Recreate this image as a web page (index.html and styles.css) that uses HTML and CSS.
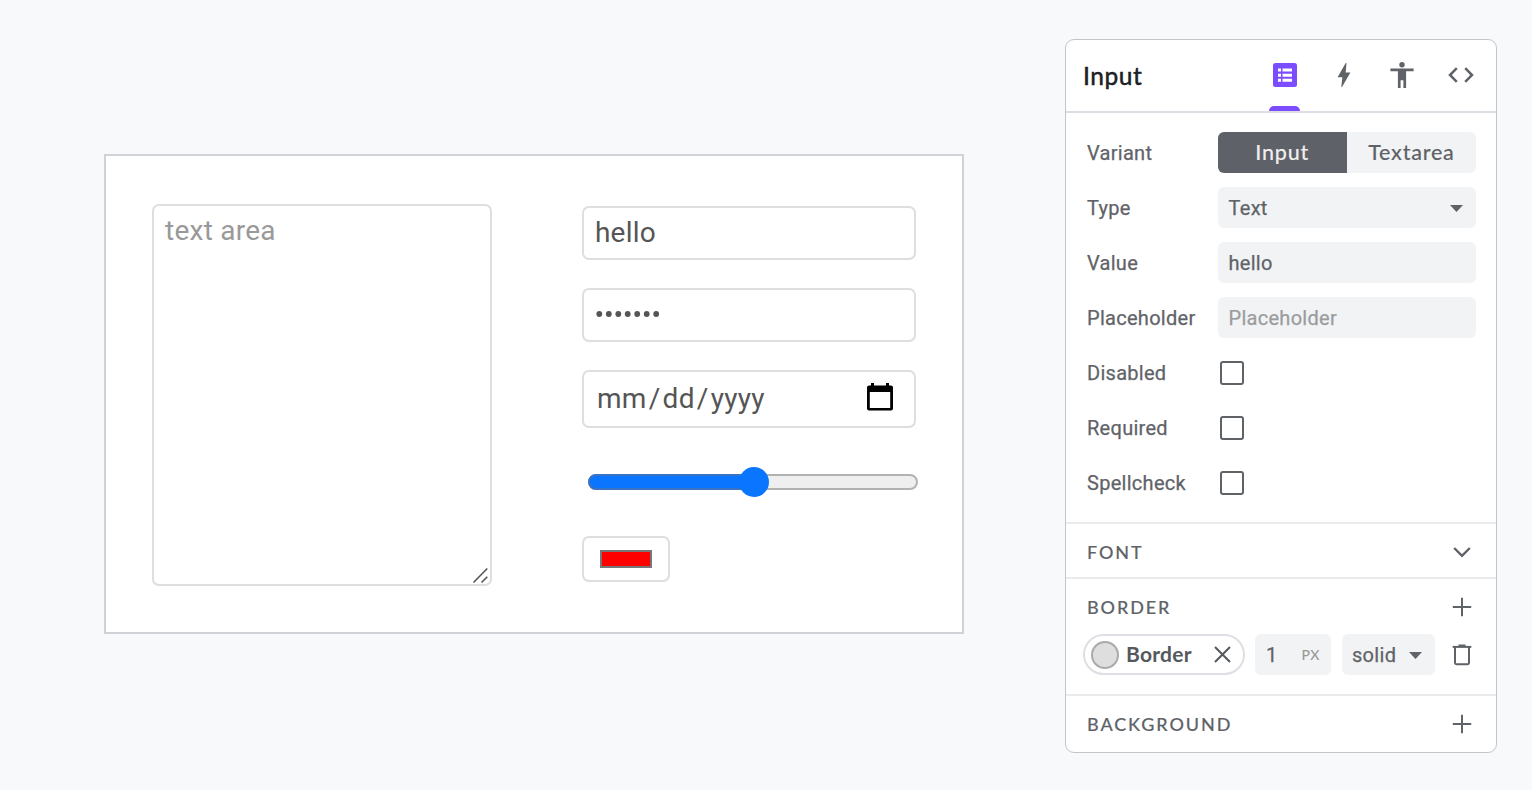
FILE: index.html
```html
<!DOCTYPE html>
<html lang="en">
<head>
<meta charset="utf-8">
<title>Input properties</title>
<link rel="stylesheet" href="styles.css">
</head>
<body>
<main class="workspace">
  <section class="artboard">
    <div class="textarea"><span class="t-area">text area</span>
      <svg class="grip" width="17" height="17" viewBox="0 0 17 17"><path d="M1.500 15.500 15.300 1.500M9.500 15.500 15.300 9.700" stroke="#555" stroke-width="1.600" fill="none"/></svg>
    </div>
    <div class="fields">
      <div class="field hello"><span class="t-hello">hello</span></div>
      <div class="field password">
        <svg width="66" height="8" viewBox="0 0 66 8" fill="#555"><circle cx="3.300" cy="4" r="2.900"/><circle cx="12.800" cy="4" r="2.900"/><circle cx="22.300" cy="4" r="2.900"/><circle cx="31.700" cy="4" r="2.900"/><circle cx="41.200" cy="4" r="2.900"/><circle cx="50.700" cy="4" r="2.900"/><circle cx="60.200" cy="4" r="2.900"/></svg>
      </div>
      <div class="field date"><span class="t-date">mm<b>/</b>dd<b>/</b>yyyy</span>
        <svg width="26" height="28" viewBox="0 0 26 28"><path fill-rule="evenodd" d="M4 0h3v2.600h12V0h3v2.600h2A2 2 0 0 1 26 4.600v21a2 2 0 0 1-2 2H2a2 2 0 0 1-2-2v-21A2 2 0 0 1 2 2.600h2zM2.800 9v16h20.400V9z"/></svg>
      </div>
      <div class="slider"><div class="slider-fill"></div><div class="slider-thumb"></div></div>
      <div class="color"><div class="swatch"></div></div>
    </div>
  </section>

  <aside class="panel">
    <header class="panel-head">
      <h1 class="title"><span class="t-title">Input</span></h1>
      <nav class="tabs">
        <div class="tab active"><svg width="24" height="24" viewBox="0 0 24 24"><rect width="24" height="24" rx="2.500" fill="#7c4dff"/><path fill="#fff" d="M5 5.500h3v3H5zM9.500 5.500H19v3H9.500zM5 10.700h3v3H5zM9.500 10.700H19v3H9.500zM5 15.800h3v3H5zM9.500 15.800H19v3H9.500z"/></svg></div>
        <div class="tab"><svg width="14" height="24" viewBox="0 0 14 24"><path fill="#5f6368" d="M9.500 0 8.700 9.600H13.400L5 24H4.300L5.400 14.200H.6L8.700 0z"/></svg></div>
        <div class="tab"><svg width="24" height="26" viewBox="0 0 24 26" fill="#5f6368"><circle cx="12" cy="2.700" r="2.700"/><path d="M.4 6.500h23.200v2.700h-7.500V26h-2.700v-7.800h-2.800V26H7.900V9.200H.4z"/></svg></div>
        <div class="tab"><svg width="26" height="16" viewBox="0 0 26 16"><path d="M8.800 1.200 2 8l6.800 6.800M17.200 1.200 24 8l-6.800 6.800" fill="none" stroke="#5f6368" stroke-width="2.500"/></svg></div>
      </nav>
    </header>

    <section class="props">
      <div class="row"><label>Variant</label><div class="segment"><div class="seg on"><span>Input</span></div><div class="seg"><span>Textarea</span></div></div></div>
      <div class="row"><label>Type</label><div class="control"><span>Text</span><svg class="caret" width="13" height="7" viewBox="0 0 13 7"><path d="M0 0h13L6.500 7z" fill="#5f6368"/></svg></div></div>
      <div class="row"><label>Value</label><div class="control"><span>hello</span></div></div>
      <div class="row"><label>Placeholder</label><div class="control muted"><span>Placeholder</span></div></div>
      <div class="row"><label>Disabled</label><div class="check"></div></div>
      <div class="row"><label>Required</label><div class="check"></div></div>
      <div class="row"><label>Spellcheck</label><div class="check"></div></div>
    </section>

    <section class="group font">
      <div class="group-head"><h2>FONT</h2><svg width="20" height="20" viewBox="0 0 20 20"><path d="M2.200 6 10 13.800 17.800 6" fill="none" stroke="#5f6368" stroke-width="2.400"/></svg></div>
    </section>
    <section class="group border">
      <div class="group-head"><h2>BORDER</h2><svg width="20" height="20" viewBox="0 0 20 20"><path d="M10 .8v18.400M.8 10h18.400" stroke="#5f6368" stroke-width="2"/></svg></div>
      <div class="border-row">
        <div class="chip"><i class="dot"></i><span class="t-chip">Border</span><svg width="17" height="17" viewBox="0 0 17 17"><path d="m1 1 15 15M16 1 1 16" stroke="#55595e" stroke-width="2"/></svg></div>
        <div class="width"><span>1</span><span class="t-px">PX</span></div>
        <div class="style"><span>solid</span><svg width="13" height="7" viewBox="0 0 13 7"><path d="M0 0h13L6.500 7z" fill="#5f6368"/></svg></div>
        <svg class="trash" width="20" height="22" viewBox="0 0 20 22" fill="none" stroke="#5f6368"><path stroke-width="2" d="M.7 2.900h18.600"/><path stroke-width="2" d="M6.500 1.500h7"/><path stroke-width="2" d="M3 3v15.800q0 1.400 1.400 1.400h11.200q1.400 0 1.400-1.400V3"/></svg>
      </div>
    </section>
    <section class="group background">
      <div class="group-head"><h2>BACKGROUND</h2><svg width="20" height="20" viewBox="0 0 20 20"><path d="M10 .8v18.400M.8 10h18.400" stroke="#5f6368" stroke-width="2"/></svg></div>
    </section>
  </aside>
</main>
</body>
</html>
```
FILE: styles.css
```css
* { box-sizing: border-box; }
body { margin: 0; background: #f8f9fb; font-family: Roboto, "Liberation Sans", sans-serif; color: #5f6368; }
svg { display: block; flex: none; }
span { white-space: nowrap; }

.workspace { display: flex; justify-content: space-between; align-items: flex-start; height: 790px; padding: 39px 35px 0 104px; }

/* Artboard */
.artboard { display: flex; width: 860px; height: 480px; margin-top: 115px; padding: 48px 44px 48px 46px; gap: 90px; background: #fff; border: 2px solid #d1d2d8; }
.textarea { display: flex; flex: none; position: relative; width: 340px; height: 382px; padding: 8px 11px; border: 2px solid #dedede; border-radius: 7px; font-size: 28px; line-height: 33px; letter-spacing: .25px; color: #999; }
.grip { position: absolute; right: 1px; bottom: 0; }
.fields { display: flex; flex: none; flex-direction: column; width: 336px; padding-top: 2px; font-size: 28px; color: #555; }
.field { display: flex; align-items: center; width: 334px; height: 54px; margin-bottom: 28px; padding: 0 11px; border: 2px solid #dedede; border-radius: 7px; line-height: 33px; }
.hello { padding-bottom: 2px; letter-spacing: .2px; }
.password { padding: 0 12px 2px; }
.date { justify-content: space-between; height: 58px; margin-bottom: 46px; padding: 0 21px 2px 13px; letter-spacing: .3px; }
.date b { margin: 0 2px; font-weight: 400; }
.date svg { margin-bottom: 3px; }
.slider { display: flex; align-items: center; width: 330px; height: 16px; margin-left: 6px; background: #efefef; border: 2px solid #b2b2b2; border-radius: 8px; }
.slider-fill { width: 163px; height: 16px; flex: none; margin-left: -2px; background: #0a75ff; border: 2px solid #3b73c4; border-radius: 8px 0 0 8px; }
.slider-thumb { width: 30px; height: 30px; flex: none; margin-left: -12px; background: #0a75ff; border-radius: 50%; }
.color { display: flex; align-items: center; justify-content: center; width: 88px; height: 46px; margin-top: 46px; border: 2px solid #dedede; border-radius: 7px; }
.swatch { width: 52px; height: 18px; background: #f00; border: 2px solid #777; }

/* Inspector panel */
.panel { width: 432px; height: 714px; background: #fff; border: 1px solid #c3c5c8; border-radius: 9px; }
.panel-head { display: flex; justify-content: space-between; height: 73px; padding: 0 6px 0 17px; border-bottom: 2px solid #dddde3; }
.title { display: flex; align-items: center; margin: 0; font: 500 24.500px/30px "Google Sans", Lato, sans-serif; letter-spacing: .5px; color: #202124; -webkit-text-stroke: .3px #202124; }
.tabs { display: flex; }
.tab { display: flex; align-items: center; justify-content: center; width: 58.600px; padding-bottom: 1px; }
.active { position: relative; }
.active::after { content: ""; position: absolute; bottom: 0; width: 31px; height: 5px; background: #7c4dff; border-radius: 5px 5px 0 0; }

.props { display: flex; flex-direction: column; gap: 14px; height: 409px; padding: 19px 20px 0 21px; font-size: 20px; line-height: 24px; letter-spacing: .28px; -webkit-text-stroke: .25px currentColor; }
.row { display: flex; align-items: center; height: 41px; flex: none; }
.row label { display: flex; width: 130.500px; flex: none; }
.control { display: flex; align-items: center; justify-content: space-between; width: 258.500px; height: 41px; padding: 0 13px 0 11px; background: #f1f3f4; border-radius: 6px; }
.caret { margin-top: 1px; }
.muted { color: #9b9c9e; }
.segment { display: flex; width: 258.500px; height: 41px; overflow: hidden; border-radius: 6px; background: #f1f3f4; font: 500 21.500px/26px "Google Sans", Lato, sans-serif; letter-spacing: .75px; -webkit-text-stroke: .1px currentColor; }
.seg { display: flex; flex: 1; align-items: center; justify-content: center; padding-bottom: 2px; }
.on { background: #5f6168; color: #eee; }
.check { width: 24px; height: 24px; margin-left: 2.500px; border: 2.500px solid #5f6368; border-radius: 3px; }

.group { padding: 0 24px 0 21px; border-top: 2px solid #ebebed; }
.group-head { display: flex; align-items: center; justify-content: space-between; height: 55px; }
.group h2 { display: flex; margin: 0; font: 500 18px/24px "Google Sans", Lato, sans-serif; letter-spacing: 1.900px; -webkit-text-stroke: .15px currentColor; }
.font { height: 55px; }
.border { height: 117px; }
.border-row { display: flex; align-items: center; margin-left: -4px; height: 41px; -webkit-text-stroke: .25px currentColor; }
.chip { display: flex; align-items: center; width: 162px; height: 41px; padding: 0 12px 0 6px; border: 2px solid #dedfe5; border-radius: 21px; color: #55595e; font: 700 21px/26px "Google Sans", Lato, sans-serif; letter-spacing: .25px; -webkit-text-stroke: 0; }
.chip svg { margin-left: auto; }
.t-chip { padding-bottom: 2px; }
.dot { width: 28px; height: 28px; margin-right: 7px; flex: none; background: #dedede; border: 2px solid #aaa; border-radius: 50%; }
.width { display: flex; align-items: center; justify-content: space-between; width: 76px; height: 41px; margin-left: 10px; padding: 0 11px; background: #f1f3f4; border-radius: 6px; font-size: 20px; }
.t-px { font: 500 14px/18px "Google Sans", Lato, sans-serif; letter-spacing: .5px; color: #999; -webkit-text-stroke: 0; }
.style { display: flex; align-items: center; justify-content: space-between; width: 93px; height: 41px; margin-left: 11px; padding: 0 13px 0 10px; background: #f1f3f4; border-radius: 6px; font-size: 20px; letter-spacing: .3px; }
.style svg { margin-top: 1px; }
.trash { margin-left: auto; }
```
